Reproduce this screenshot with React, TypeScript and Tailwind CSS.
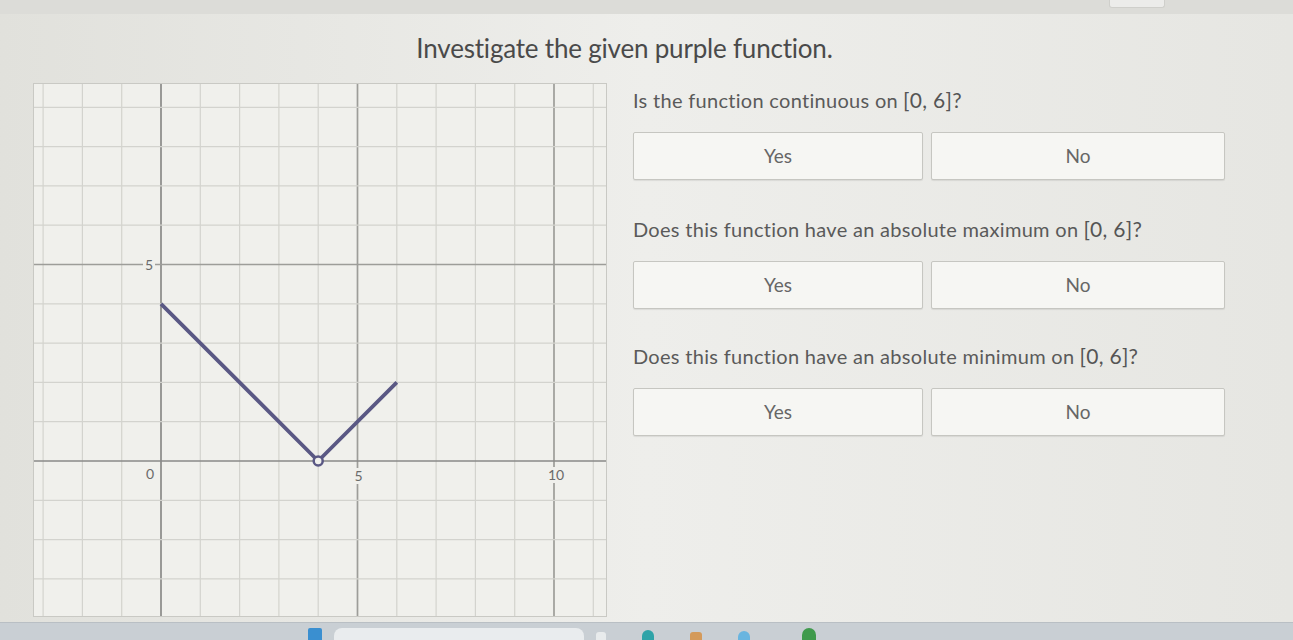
const UNIT = 39.3
const OX = 127
const OY = 377

const px = (x: number) => OX + x * UNIT
const py = (y: number) => OY - y * UNIT

const paper = '#f0f0ec'
const ink = '#5a5884'

// tick label with a paper-coloured box behind it so grid lines break around it
const Tick = ({ x, y, label }: { x: number; y: number; label: string }) => {
  const w = label.length * 8 + 4
  return (
    <g>
      <rect x={x - w / 2} y={y - 8} width={w} height={16} fill={paper} />
      <text
        x={x}
        y={y + 5}
        textAnchor="middle"
        fill="#6a6a6a"
        fontSize="14"
        fontFamily="Lato, sans-serif"
      >
        {label}
      </text>
    </g>
  )
}

const Graph = () => {
  const cols = Array.from({ length: 15 }, (_, i) => i - 3)
  const rows = Array.from({ length: 14 }, (_, i) => i - 4)

  return (
    <svg width={574} height={534} className="shrink-0 bg-[#f0f0ec] border border-[#c9c9c4]">
      {cols.map((k) => (
        <line
          key={`v${k}`}
          x1={px(k)}
          x2={px(k)}
          y1={0}
          y2={534}
          stroke={k === 0 ? '#8a8a88' : k % 5 === 0 ? '#9d9d99' : '#d3d3ce'}
          strokeWidth={k % 5 === 0 ? 1.7 : 1.2}
        />
      ))}
      {rows.map((j) => (
        <line
          key={`h${j}`}
          x1={0}
          x2={574}
          y1={py(j)}
          y2={py(j)}
          stroke={j === 0 ? '#8a8a88' : j % 5 === 0 ? '#9d9d99' : '#d3d3ce'}
          strokeWidth={j % 5 === 0 ? 1.7 : 1.2}
        />
      ))}

      <Tick x={px(0) - 12} y={py(5)} label="5" />
      <Tick x={px(0) - 11} y={py(0) + 13} label="0" />
      <Tick x={px(5) + 1} y={py(0) + 15} label="5" />
      <Tick x={px(10) + 2} y={py(0) + 14} label="10" />

      <polyline
        points={`${px(0)},${py(4)} ${px(4)},${py(0)} ${px(6)},${py(2)}`}
        fill="none"
        stroke={ink}
        strokeWidth={3.8}
        strokeLinejoin="round"
      />
      <circle cx={px(4)} cy={py(0)} r={4.5} fill={paper} stroke={ink} strokeWidth={2.5} />
    </svg>
  )
}

const Interval = () => (
  <span className="text-[21px] text-[#555] ml-[5px]">[0, 6]?</span>
)

const Choice = ({ label, w }: { label: string; w: string }) => (
  <button
    className={`${w} h-[48px] bg-[#f6f6f3] border border-[#c6c6c1] rounded-[2px] shadow-[0_1px_1px_rgba(0,0,0,0.08)] text-[19px] text-[#666]`}
  >
    {label}
  </button>
)

const Question = ({ text, mt }: { text: string; mt: string }) => (
  <div className={mt}>
    <p className="text-[20px] leading-[26px] text-[#5a5a5a] tracking-[0.3px]">
      {text}
      <Interval />
    </p>
    <div className="flex gap-2 mt-[19px]">
      <Choice label="Yes" w="w-[290px]" />
      <Choice label="No" w="w-[294px]" />
    </div>
  </div>
)

const Taskbar = () => (
  <div className="h-[18px] mt-auto bg-[#c9cfd4] border-t border-[#b9bfc4] flex items-end gap-3 pl-[308px]">
    <div className="w-[14px] h-[12px] bg-[#3a8fd0] rounded-t-[2px]" />
    <div className="w-[250px] h-[12px] bg-[#e9ecee] rounded-t-[8px]" />
    <div className="w-[10px] h-[8px] bg-[#e8ebec] rounded-t-[3px]" />
    <div className="w-[12px] h-[10px] bg-[#2fa3a8] rounded-t-full ml-6" />
    <div className="w-[12px] h-[8px] bg-[#d49a5a] rounded-t-[3px] ml-6" />
    <div className="w-[12px] h-[9px] bg-[#69b5e0] rounded-t-full ml-6" />
    <div className="w-[14px] h-[12px] bg-[#3f9a4c] rounded-t-full ml-10" />
  </div>
)

export default function App() {
  return (
    <div
      className="w-[1293px] h-[640px] overflow-hidden flex flex-col bg-gradient-to-r from-[#e1e1dc] via-[#eeeeeb] to-[#e6e6e2]"
      style={{ fontFamily: 'Lato, "Open Sans", sans-serif' }}
    >
      <div className="h-[14px] bg-[#dcdcd8] flex justify-end pr-[128px]">
        <div className="w-[56px] h-[8px] bg-[#ececea] border border-[#cfcfcb] border-t-0 rounded-b-[3px]" />
      </div>

      <h1 className="h-[69px] pt-[18px] text-center text-[26px] leading-[32px] text-[#4a4a4a] tracking-[-0.2px] pr-[44px]">
        Investigate the given purple function.
      </h1>

      <div className="flex pl-[33px]">
        <Graph />
        <div className="pl-[26px]">
          <Question text="Is the function continuous on" mt="mt-[4px]" />
          <Question text="Does this function have an absolute maximum on" mt="mt-[36px]" />
          <Question text="Does this function have an absolute minimum on" mt="mt-[34px]" />
        </div>
      </div>

      <Taskbar />
    </div>
  )
}
